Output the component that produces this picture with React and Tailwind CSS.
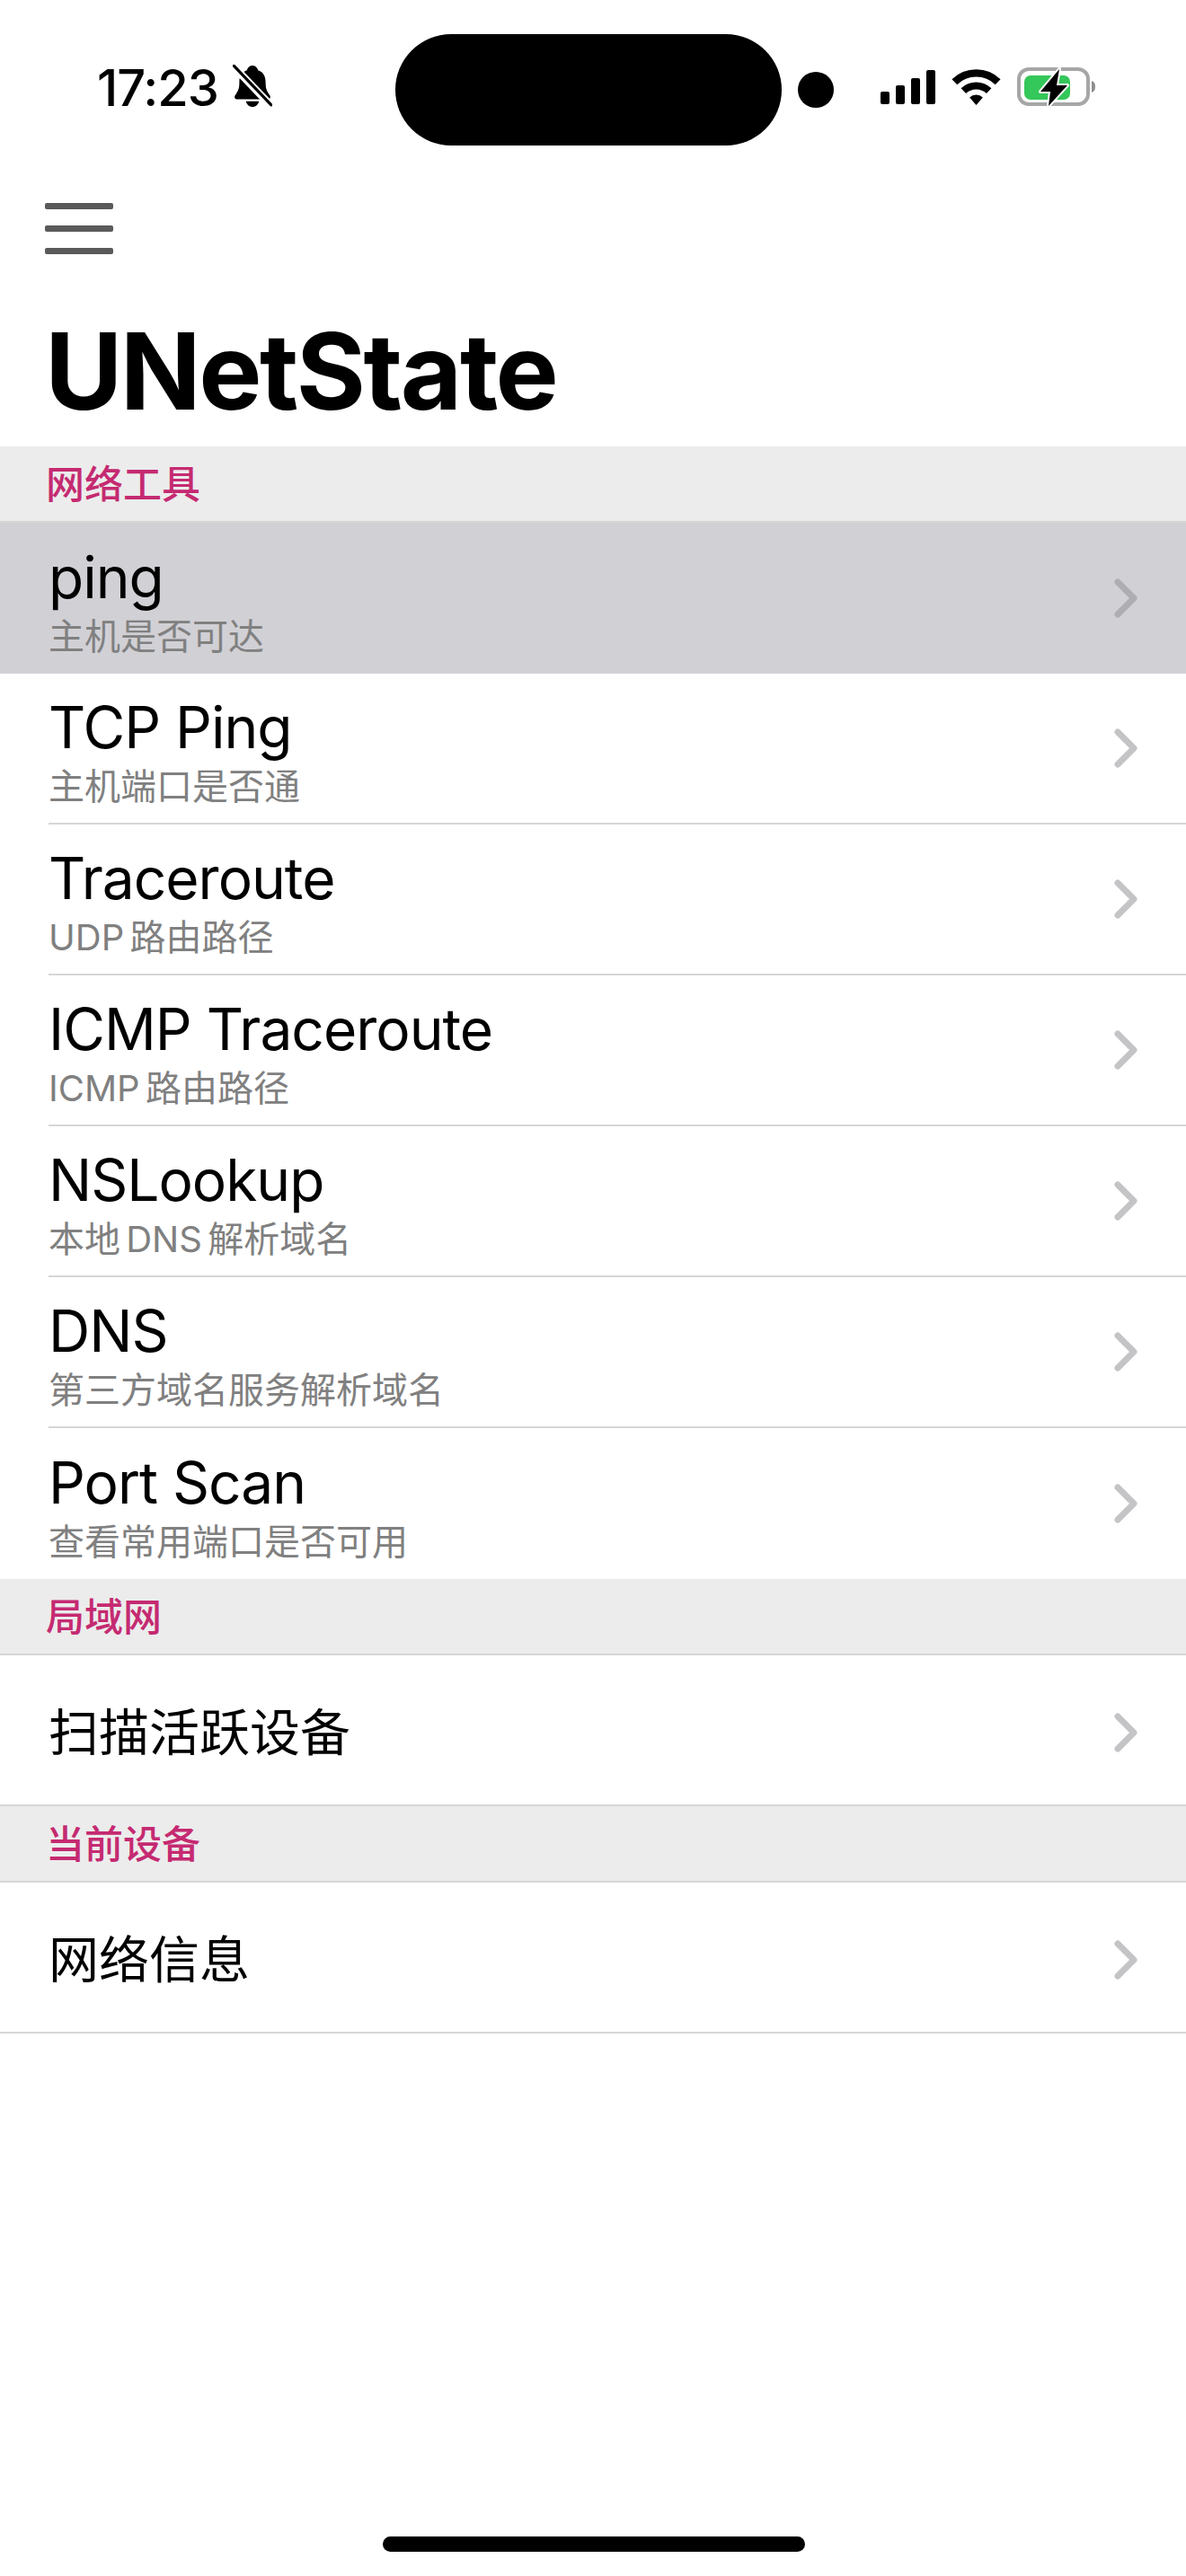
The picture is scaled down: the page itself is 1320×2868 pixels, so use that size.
const tools = [
  { title: 'ping', sub: '主机是否可达', pressed: true },
  { title: 'TCP Ping', sub: '主机端口是否通' },
  { title: 'Traceroute', sub: 'UDP 路由路径' },
  { title: 'ICMP Traceroute', sub: 'ICMP 路由路径' },
  { title: 'NSLookup', sub: '本地 DNS 解析域名' },
  { title: 'DNS', sub: '第三方域名服务解析域名' },
  { title: 'Port Scan', sub: '查看常用端口是否可用' },
];

const BellSlash = () => (
  <svg width="44" height="48" viewBox="0 0 42 46" className="ml-[16px] mt-[-4px]">
    <path d="M21 1c3 0 5 2 6 5 6 2 8 7 8 13 0 6 1 9 4 13 2 2 1 5-2 5H5c-3 0-4-3-2-5 3-4 4-7 4-13 0-6 2-11 8-13 1-3 3-5 6-5z" fill="#000" />
    <path d="M14 39h14c-1 4-4 6-7 6s-6-2-7-6z" fill="#000" />
    <path d="M1 2l40 42" stroke="#fff" strokeWidth="8" />
    <path d="M1 1l40 42" stroke="#000" strokeWidth="3" strokeLinecap="round" />
  </svg>
);

const Signal = () => (
  <div className="flex items-end gap-[7px] h-[38px] ml-[52px] mt-[41px]">
    <div className="w-[10px] h-[14px] rounded-[2px] bg-black" />
    <div className="w-[10px] h-[21px] rounded-[2px] bg-black" />
    <div className="w-[10px] h-[29px] rounded-[2px] bg-black" />
    <div className="w-[10px] h-[38px] rounded-[2px] bg-black" />
  </div>
);

const Wifi = () => (
  <svg width="57" height="42" viewBox="0 0 54 40" className="ml-[17px] mt-[39px]">
    <path d="M4 14.5a33 33 0 0 1 46 0" fill="none" stroke="#000" strokeWidth="8" />
    <path d="M13.5 24a19.5 19.5 0 0 1 27 0" fill="none" stroke="#000" strokeWidth="7.5" />
    <path d="M20 31a10 10 0 0 1 14 0l-7 8z" fill="#000" />
  </svg>
);

const Battery = () => (
  <svg width="90" height="46" viewBox="0 0 90 46" className="ml-[16px] mt-[37px]">
    <rect x="3" y="3" width="77" height="39" rx="11" fill="none" stroke="#a6a6a6" strokeWidth="4" />
    <rect x="9" y="10" width="51" height="27" rx="7" fill="#34c759" />
    <path d="M84 16c3 1 4 3 4 6.500s-1 5.500-4 6.500z" fill="#8e8e8e" />
    <path d="M48 3L27 28h11l-2 16 21-23H45z" fill="#000" stroke="#fff" strokeWidth="4" strokeLinejoin="round" paintOrder="stroke" />
  </svg>
);

const StatusBar = () => (
  <div className="flex items-start h-[200px] pt-[38px]">
    <div className="flex items-start ml-[108px] w-[332px]">
      <span className="mt-[30px] text-[56px] leading-[60px] font-medium tracking-[-1px]">17:23</span>
      <div className="mt-[38px]">
        <BellSlash />
      </div>
    </div>
    <div className="w-[430px] h-[124px] rounded-full bg-black" />
    <div className="w-[40px] h-[40px] rounded-full bg-black ml-[18px] mt-[42px]" />
    <div className="flex items-start mt-[-1px]">
      <Signal />
      <Wifi />
      <Battery />
    </div>
  </div>
);

const Chevron = ({ pressed }) => (
  <svg width="26" height="44" viewBox="0 0 26 44" className="mr-[54px] shrink-0">
    <path d="M4 4l18 18L4 40" fill="none" stroke={pressed ? '#aeadb2' : '#c4c4c7'} strokeWidth="7" strokeLinecap="round" strokeLinejoin="round" />
  </svg>
);

const SectionHeader = ({ label }) => (
  <div className="h-[85px] pl-[51px] flex items-center bg-[#ececec] border-b-2 border-[#d6d6d6]">
    <span className="text-[43px] leading-[50px] font-medium text-[#c52a71]">{label}</span>
  </div>
);

const ToolRow = ({ title, sub, pressed, last }) => (
  <div className={`h-[168px] pl-[54px] flex items-center ${pressed ? 'bg-[#d1d0d5]' : 'bg-white'}`}>
    <div className={`flex-1 h-full flex items-center ${last || pressed ? '' : 'border-b-2 border-[#d6d6d6]'}`}>
      <div className="flex-1 min-w-0">
        <div className="text-[64px] leading-[68px] tracking-[-1px] mt-[8px]">{title}</div>
        <div className="text-[40px] leading-[44px] mt-[10px] text-[#808080] [word-spacing:-5px]">{sub}</div>
      </div>
      <Chevron pressed={pressed} />
    </div>
  </div>
);

const SimpleRow = ({ title }) => (
  <div className="h-[168px] pl-[54px] pt-[6px] flex items-center bg-white border-b-2 border-[#d6d6d6]">
    <div className="flex-1 text-[56px] leading-[64px]">{title}</div>
    <Chevron />
  </div>
);

export default function App() {
  return (
    <div className="relative w-[1320px] h-[2868px] bg-white text-black overflow-hidden font-['Inter','Noto_Sans_CJK_SC',sans-serif]">
      <StatusBar />
      <div className="flex flex-col gap-[18px] w-[76px] ml-[50px] mt-[26px]">
        <div className="h-[7px] rounded-[2px] bg-[#5a5a5a]" />
        <div className="h-[7px] rounded-[2px] bg-[#5a5a5a]" />
        <div className="h-[7px] rounded-[2px] bg-[#5a5a5a]" />
      </div>
      <h1 className="ml-[50px] mt-[55px] h-[159px] text-[118px] leading-[150px] font-bold tracking-[-2.500px]">UNetState</h1>
      <SectionHeader label="网络工具" />
      {tools.map((t, i) => (
        <ToolRow key={t.title} {...t} last={i === tools.length - 1} />
      ))}
      <SectionHeader label="局域网" />
      <SimpleRow title="扫描活跃设备" />
      <SectionHeader label="当前设备" />
      <SimpleRow title="网络信息" />
      <div className="absolute left-[426px] top-[2824px] w-[470px] h-[17px] rounded-full bg-black" />
    </div>
  );
}
